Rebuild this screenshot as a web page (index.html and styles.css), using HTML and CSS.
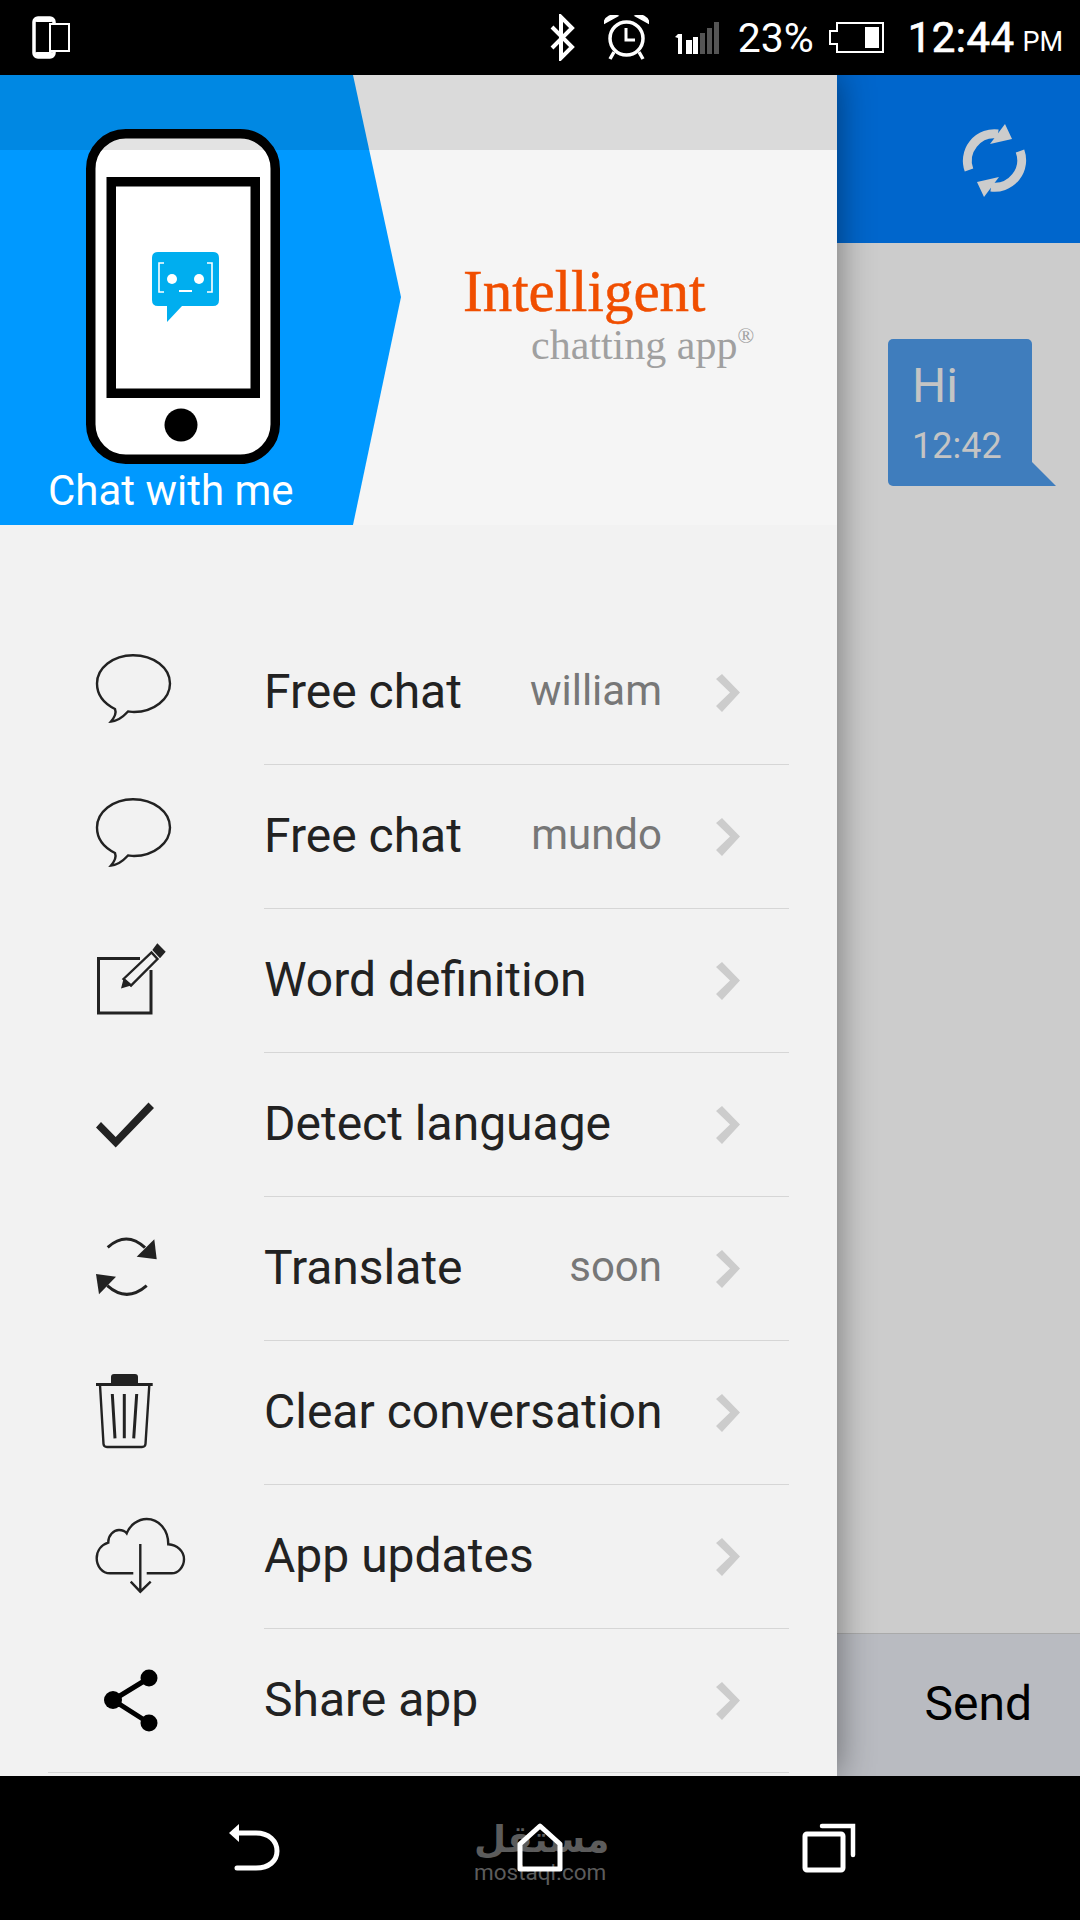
FILE: index.html
```html
<!DOCTYPE html>
<html lang="en">
<head>
  <meta charset="UTF-8" />
  <title>Intelligent chatting app</title>
  <link rel="stylesheet" href="styles.css">
</head>
<body>
<div class="screen">

  <div class="status-bar">
    <svg class="st-dual" width="38" height="43" viewBox="0 0 38 43">
      <rect x="2" y="2" width="20" height="39" rx="4" fill="none" stroke="#fff" stroke-width="3.5"/>
      <rect x="2" y="1" width="20" height="5" rx="3" fill="#fff"/>
      <rect x="2" y="36" width="20" height="6" rx="3" fill="#fff"/>
      <rect x="18" y="8" width="19" height="27" fill="#000" stroke="#fff" stroke-width="2"/>
    </svg>
    <div class="status-right">
      <svg class="st-bt" width="25" height="47" viewBox="0 0 25 47">
        <path d="M2,13 L22,33 L11,44 V3 L22,14 L2,34" fill="none" stroke="#fff" stroke-width="4"/>
      </svg>
      <svg class="st-alarm" width="45" height="45" viewBox="0 0 45 45">
        <circle cx="22.5" cy="23.5" r="16.5" fill="none" stroke="#fff" stroke-width="3.5"/>
        <path d="M22,13 V25 H31" fill="none" stroke="#fff" stroke-width="3"/>
        <path d="M0,8 C2,2 8,-1 13,1 Z M45,8 C43,2 37,-1 32,1 Z" fill="#fff" stroke="#fff" stroke-width="2"/>
        <path d="M10,37 L6,44 M35,37 L39,44" stroke="#fff" stroke-width="3.5"/>
      </svg>
      <svg class="st-signal" width="44" height="32" viewBox="0 0 44 32">
        <path d="M0,15 L3,12 H7 V32 H3 V16 Z" fill="#fff"/>
        <rect x="11" y="18" width="6" height="14" fill="#fff"/>
        <rect x="18" y="15" width="5" height="17" fill="#fff"/>
        <rect x="25" y="11" width="5" height="21" fill="#555"/>
        <rect x="32" y="6" width="5" height="26" fill="#555"/>
        <rect x="39" y="0" width="5" height="32" fill="#555"/>
      </svg>
      <span class="st-pct">23%</span>
      <svg class="st-batt" width="55" height="31" viewBox="0 0 55 31">
        <path d="M8,1 H54 V30 H8 V22 H1 V9 H8 Z" fill="#000" stroke="#fff" stroke-width="2"/>
        <rect x="36" y="5" width="14" height="21" fill="#fff"/>
      </svg>
      <span class="st-time">12:44</span>
      <span class="st-ampm">PM</span>
    </div>
  </div>

  <div class="content">
    <div class="drawer">
      <div class="drawer-head">
        <div class="hero">
          <svg class="hero-phone" width="194" height="335" viewBox="0 0 194 335">
            <rect x="4.75" y="4.75" width="184.5" height="325.5" rx="35" fill="#fff" stroke="#000" stroke-width="9.5"/>
            <rect x="25.25" y="52.75" width="144" height="211.5" fill="#fff" stroke="#000" stroke-width="9.5"/>
            <circle cx="95" cy="296" r="16.5" fill="#000"/>
            <path d="M72,123 H127 Q133,123 133,129 V171 Q133,177 127,177 H96 L81,193 V177 H72 Q66,177 66,171 V129 Q66,123 72,123 Z" fill="#00aeef"/>
            <path d="M78,134 H73 V163 H78 M121,134 H126 V163 H121" fill="none" stroke="#fff" stroke-width="1.6"/>
            <circle cx="86" cy="150" r="5" fill="#fff"/>
            <circle cx="113" cy="150" r="5" fill="#fff"/>
            <rect x="93" y="161" width="13" height="2" fill="#fff"/>
          </svg>
          <div class="hero-label">Chat with me</div>
        </div>
        <div class="logo">
          <div class="logo-title">Intelligent</div>
          <div class="logo-sub">chatting app<sup>®</sup></div>
        </div>
        <div class="head-tint"></div>
      </div>

      <div class="menu">
        <div class="menu-row">
          <svg class="row-icon" width="130" height="144" viewBox="0 0 130 144">
            <path class="ln" d="M58,90.5 C60,90.7 62,91 64,91 C84,91 100,78 100,62.5 C100,47 84,34.2 63,34.2 C43,34.2 27,47 27,62.5 C27,73 33,82 45,88 C47,93 44,97 41,100.5 C47,100 53,96 58,90.5 Z"/>
          </svg>
          <div class="row-main">
            <span class="row-title">Free chat</span>
            <span class="row-sub">william</span>
            <svg class="chev" width="25" height="38" viewBox="0 0 25 38"><polygon points="0,5 6,0 24,18.5 6,38 0,32 14,18.5"/></svg>
          </div>
        </div>
        <div class="menu-row">
          <svg class="row-icon" width="130" height="144" viewBox="0 0 130 144">
            <path class="ln" d="M58,90.5 C60,90.7 62,91 64,91 C84,91 100,78 100,62.5 C100,47 84,34.2 63,34.2 C43,34.2 27,47 27,62.5 C27,73 33,82 45,88 C47,93 44,97 41,100.5 C47,100 53,96 58,90.5 Z"/>
          </svg>
          <div class="row-main">
            <span class="row-title">Free chat</span>
            <span class="row-sub">mundo</span>
            <svg class="chev" width="25" height="38" viewBox="0 0 25 38"><polygon points="0,5 6,0 24,18.5 6,38 0,32 14,18.5"/></svg>
          </div>
        </div>
        <div class="menu-row">
          <svg class="row-icon" width="130" height="144" viewBox="0 0 130 144">
            <path class="ln ln-3" d="M70,49.5 H28.5 V104 H81 V61"/>
            <path class="ln" d="M53.5,70 L81.5,43.5 L87.5,50 L61,76.5 Z"/>
            <path class="fl" d="M51,79.5 L53.5,70 L61,76.5 Z M87.3,34.3 L95.7,42.7 L90,49.3 L82.3,41 Z"/>
          </svg>
          <div class="row-main">
            <span class="row-title">Word definition</span>
            <span class="row-sub"></span>
            <svg class="chev" width="25" height="38" viewBox="0 0 25 38"><polygon points="0,5 6,0 24,18.5 6,38 0,32 14,18.5"/></svg>
          </div>
        </div>
        <div class="menu-row">
          <svg class="row-icon" width="130" height="144" viewBox="0 0 130 144">
            <polygon class="fl" points="26,74.5 31,69 45.7,84 78.5,49.5 84,55 45.7,94.5"/>
          </svg>
          <div class="row-main">
            <span class="row-title">Detect language</span>
            <span class="row-sub"></span>
            <svg class="chev" width="25" height="38" viewBox="0 0 25 38"><polygon points="0,5 6,0 24,18.5 6,38 0,32 14,18.5"/></svg>
          </div>
        </div>
        <div class="menu-row">
          <svg class="row-icon" width="130" height="144" viewBox="0 0 130 144">
            <path class="ln ln-3" d="M37.7,50.3 Q56.7,33.5 75,50.7 M37.3,88.7 Q56.7,106 76.7,88.7"/>
            <polygon class="fl" points="84.3,42.3 86.7,62.3 66.7,59.7"/>
            <polygon class="fl" points="26,77 46,79.7 29,97.3"/>
          </svg>
          <div class="row-main">
            <span class="row-title">Translate</span>
            <span class="row-sub">soon</span>
            <svg class="chev" width="25" height="38" viewBox="0 0 25 38"><polygon points="0,5 6,0 24,18.5 6,38 0,32 14,18.5"/></svg>
          </div>
        </div>
        <div class="menu-row">
          <svg class="row-icon" width="130" height="144" viewBox="0 0 130 144">
            <path class="fl" d="M41,43 V36 Q41,33 44,33 H65 Q68,33 68,36 V43 Z"/>
            <path class="ln ln-3" d="M26,43.5 H82.7"/>
            <path class="ln" d="M30,44 L33.5,103 Q33.8,106 37,106 H72 Q75.2,106 75.5,103 L79.3,44"/>
            <path class="ln ln-3" d="M42.3,53 L45,97.3 M54.3,53 V97.3 M66.7,53 L63.7,97.3"/>
          </svg>
          <div class="row-main">
            <span class="row-title">Clear conversation</span>
            <span class="row-sub"></span>
            <svg class="chev" width="25" height="38" viewBox="0 0 25 38"><polygon points="0,5 6,0 24,18.5 6,38 0,32 14,18.5"/></svg>
          </div>
        </div>
        <div class="menu-row">
          <svg class="row-icon" width="130" height="144" viewBox="0 0 130 144">
            <path class="ln" d="M63.3,88.3 H40 C32,88.3 26.7,81 26.7,73.3 C26.7,66 31,60 38.3,57.7 C38,50 44,45 49,45 C52,45 55,46 56.7,48.3 C60,40 68,34 76.7,34 C89,34 98.3,45 98.3,59.3 C107,60 114,66 114,74.3 C114,82 108,88.3 101.7,88.3 H76.7"/>
            <path class="ln" d="M70.3,59 V106 M60.7,96.7 L70.3,106.7 L80.7,96.7"/>
          </svg>
          <div class="row-main">
            <span class="row-title">App updates</span>
            <span class="row-sub"></span>
            <svg class="chev" width="25" height="38" viewBox="0 0 25 38"><polygon points="0,5 6,0 24,18.5 6,38 0,32 14,18.5"/></svg>
          </div>
        </div>
        <div class="menu-row menu-row-last">
          <svg class="row-icon" width="130" height="144" viewBox="0 0 130 144">
            <path class="ln-share" d="M79,49 L43,71 L79,94"/>
            <circle class="dot" cx="79" cy="49" r="8.5"/>
            <circle class="dot" cx="43" cy="71" r="9"/>
            <circle class="dot" cx="79" cy="94" r="8.5"/>
          </svg>
          <div class="row-main">
            <span class="row-title">Share app</span>
            <span class="row-sub"></span>
            <svg class="chev" width="25" height="38" viewBox="0 0 25 38"><polygon points="0,5 6,0 24,18.5 6,38 0,32 14,18.5"/></svg>
          </div>
        </div>
        <div class="menu-end"></div>
      </div>
    </div>

    <div class="chat">
      <div class="app-bar">
        <svg class="refresh" width="70" height="80" viewBox="0 0 70 80">
          <g>
            <path d="M9,50 A27,27 0 0 1 38,14" fill="none" stroke="#ccc" stroke-width="9"/>
            <polygon points="45,4 52,19 30,24" fill="#ccc"/>
          </g>
          <g transform="rotate(180 34.5 40.5)">
            <path d="M9,50 A27,27 0 0 1 38,14" fill="none" stroke="#ccc" stroke-width="9"/>
            <polygon points="45,4 52,19 30,24" fill="#ccc"/>
          </g>
        </svg>
      </div>
      <div class="messages">
        <div class="bubble">
          <div class="bubble-text">Hi</div>
          <div class="bubble-time">12:42</div>
        </div>
      </div>
      <div class="send-bar"><span class="send-btn">Send</span></div>
    </div>
  </div>

  <div class="nav-bar">
    <div class="watermark">
      <div class="wm-ar">مستقل</div>
      <div class="wm-en">mostaql.com</div>
    </div>
    <svg class="nav-back" width="55" height="50" viewBox="0 0 55 50">
      <path d="M10,1 V19 L0,10 Z" fill="#fff" transform="translate(2,0)"/>
      <path d="M12,10 H29 C42,10 50,18 50,28 C50,38 42,45 29,45 H10" fill="none" stroke="#fff" stroke-width="5" stroke-linecap="round"/>
    </svg>
    <svg class="nav-home" width="50" height="50" viewBox="0 0 50 50">
      <path d="M25,3 L5,21 V46 H45 V21 Z" fill="none" stroke="#fff" stroke-width="5" stroke-linejoin="round"/>
    </svg>
    <svg class="nav-recent" width="55" height="50" viewBox="0 0 55 50">
      <rect x="4" y="11" width="38" height="36" rx="2" fill="none" stroke="#fff" stroke-width="5"/>
      <path d="M21,3 H52 V32" fill="none" stroke="#fff" stroke-width="4.5" stroke-linecap="round"/>
    </svg>
  </div>

</div>
</body>
</html>
```

FILE: styles.css
```css
* {
  box-sizing: border-box;
}
body {
  margin: 0;
  background: #000;
  font-family: Roboto, "Liberation Sans", sans-serif;
}
.screen {
  width: 1080px;
  height: 1920px;
  display: flex;
  flex-direction: column;
  overflow: hidden;
}

/* status bar */
.status-bar {
  height: 75px;
  background: #000;
  color: #fff;
  display: flex;
  align-items: center;
  padding-left: 32px;
  position: relative;
  z-index: 3;
}
.status-right {
  margin-left: auto;
  display: flex;
  align-items: center;
  padding-right: 17px;
}
.st-alarm { margin-left: 29px; }
.st-signal { margin-left: 26px; }
.st-pct {
  margin-left: 19px;
  font-size: 41px;
}
.st-batt { margin-left: 15px; }
.st-time {
  margin-left: 24px;
  font-size: 42px;
  letter-spacing: 0.4px;
  -webkit-text-stroke: 0.7px #fff;
}
.st-ampm {
  margin-left: 8px;
  margin-top: 8px;
  font-size: 27px;
}

/* middle */
.content {
  flex: 1;
  display: flex;
  min-height: 0;
}
.drawer {
  width: 837px;
  background: #f2f2f2;
  box-shadow: 0 0 34px rgba(0,0,0,0.45);
  position: relative;
  z-index: 2;
}
.drawer-head {
  height: 450px;
  background: #f5f5f5;
  display: flex;
  position: relative;
}
.hero {
  width: 401px;
  height: 450px;
  background: #0099ff;
  clip-path: polygon(0 0, 353px 0, 401px 222px, 353px 450px, 0 450px);
  display: flex;
  flex-direction: column;
  align-items: flex-start;
  padding-top: 54px;
}
.hero-phone {
  margin-left: 86px;
  flex: none;
}
.hero-label {
  margin-left: 48px;
  margin-top: 2px;
  color: #fff;
  font-size: 42px;
  line-height: 50px;
}
.logo {
  margin-left: 62px;
  padding-top: 185px;
  font-family: "Liberation Serif", serif;
}
.logo-title {
  color: #f04e00;
  font-size: 59px;
  line-height: 62px;
  -webkit-text-stroke: 0.5px #f04e00;
}
.logo-sub {
  color: #a0a0a0;
  font-size: 42px;
  line-height: 46px;
  margin-left: 68px;
  white-space: nowrap;
}
.logo-sub sup {
  font-size: 22px;
  line-height: 0;
  vertical-align: 16px;
}
.head-tint {
  position: absolute;
  left: 0;
  top: 0;
  right: 0;
  height: 75px;
  background: rgba(0,0,0,0.11);
}

/* menu */
.menu {
  padding-top: 96px;
}
.menu-row {
  display: flex;
  height: 144px;
  padding-left: 70px;
}
.row-icon {
  flex: none;
}
.row-main {
  flex: 1;
  min-width: 0;
  display: flex;
  align-items: center;
  margin-left: 64px;
  margin-right: 48px;
  padding-right: 48px;
  border-bottom: 1px solid #d6d6d6;
}
.row-title {
  font-size: 48px;
  color: #222;
  margin-bottom: 3px;
  white-space: nowrap;
}
.row-sub {
  flex: 1;
  text-align: right;
  font-size: 42px;
  color: #777;
  margin-bottom: 5px;
}
.chev {
  flex: none;
  margin-left: 54px;
  margin-top: 1px;
  fill: #ccc;
}
.menu-row-last {
  height: 143px;
}
.menu-row-last .row-main {
  border-bottom: none;
}
.menu-end {
  height: 1px;
  margin: 0 48px;
  background: #d6d6d6;
}
.ln {
  fill: none;
  stroke: #222;
  stroke-width: 2.4;
}
.ln-3 {
  stroke-width: 3;
}
.fl {
  fill: #222;
}
.ln-share {
  fill: none;
  stroke: #000;
  stroke-width: 5;
}
.dot {
  fill: #000;
}

/* chat behind the drawer */
.chat {
  flex: 1;
  display: flex;
  flex-direction: column;
  background: #ccc;
}
.app-bar {
  height: 168px;
  background: #0066cc;
  display: flex;
  justify-content: flex-end;
  align-items: flex-start;
  padding: 45px 50px 0 0;
}
.messages {
  flex: 1;
  padding: 96px 0 0 51px;
}
.bubble {
  position: relative;
  width: 144px;
  height: 147px;
  background: #3f7dbd;
  border-radius: 5px 5px 0 5px;
  padding: 20px 0 0 24px;
  color: #c4c4c4;
}
.bubble::after {
  content: "";
  position: absolute;
  right: -24px;
  bottom: 0;
  border-bottom: 24px solid #3f7dbd;
  border-right: 24px solid transparent;
}
.bubble-text {
  font-size: 48px;
  line-height: 54px;
}
.bubble-time {
  margin-top: 12px;
  font-size: 36px;
  line-height: 42px;
}
.send-bar {
  height: 143px;
  background: #b9bbc1;
  border-top: 1px solid #aaa;
  display: flex;
  align-items: center;
  justify-content: flex-end;
  padding: 0 48px 3px 0;
}
.send-btn {
  font-size: 48px;
  color: #000;
}

/* bottom nav */
.nav-bar {
  height: 144px;
  background: #000;
  position: relative;
  z-index: 3;
  display: flex;
  align-items: flex-start;
  padding: 47px 0 0 227px;
}
.nav-bar svg {
  position: relative;
  flex: none;
}
.nav-home {
  margin-left: 233px;
}
.nav-recent {
  margin-left: 236px;
}
.watermark {
  position: absolute;
  left: 474px;
  top: 42px;
  width: 132px;
  text-align: center;
  color: #5c5c5c;
}
.wm-ar {
  font-family: "DejaVu Sans", sans-serif;
  font-weight: bold;
  font-size: 37px;
  line-height: 43px;
}
.wm-en {
  font-size: 22.5px;
  line-height: 22px;
}
```
